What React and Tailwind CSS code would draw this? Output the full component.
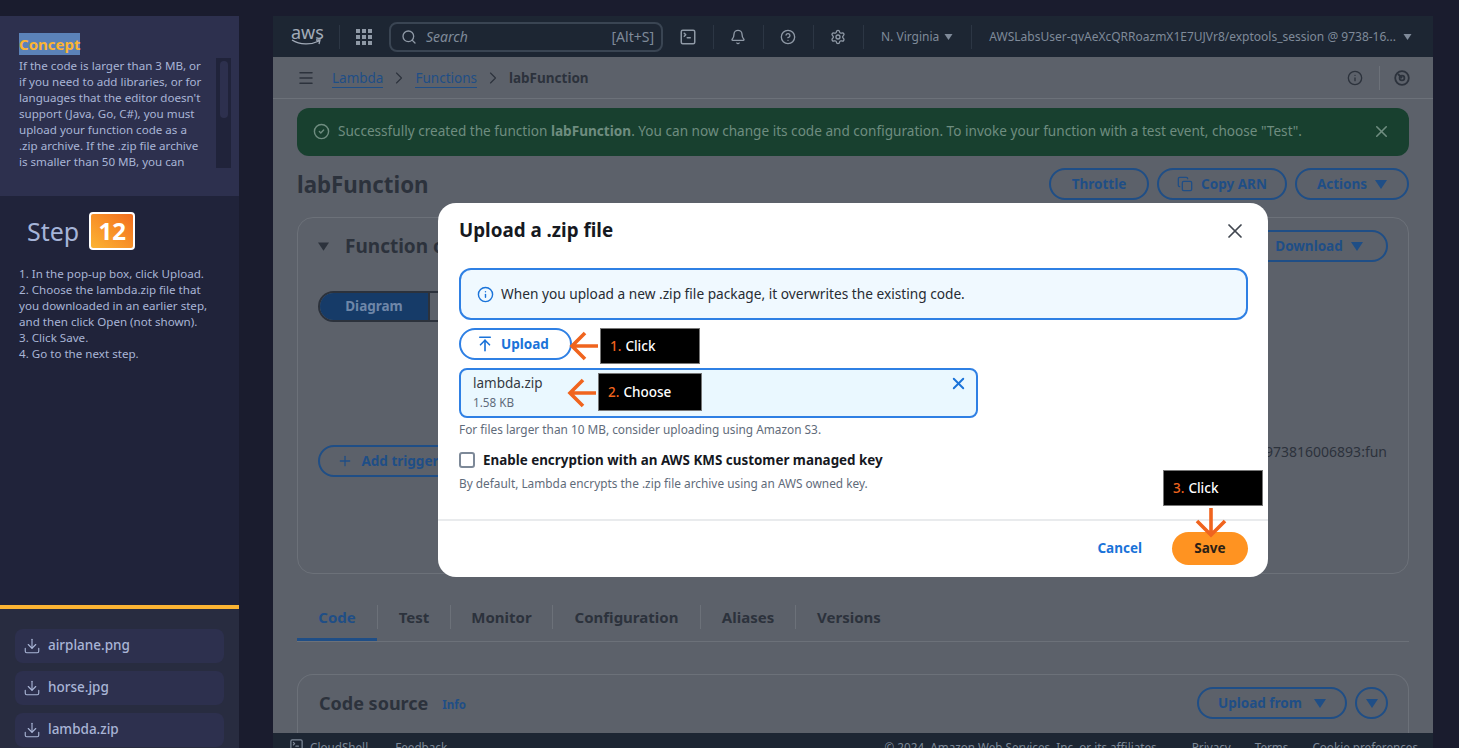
import React from "react";
import { Download, Search, Bell, CircleHelp, Settings, Menu, ChevronRight, CircleCheck, X, Copy, Info, SquareTerminal, Plus, ArrowUpToLine } from "lucide-react";

const Tri = ({ c = "w-[12px] h-[9px]" }) => (
  <svg viewBox="0 0 12 9" className={c} fill="currentColor"><path d="M0 0h12L6 9z" /></svg>
);

const ArrowLeft = () => (
  <svg width="30" height="32" viewBox="0 0 30 32" fill="none" stroke="#f0641e" strokeWidth="3.6" className="shrink-0">
    <path d="M30 16H4M17 3 4 16l13 13" />
  </svg>
);

const Callout = ({ num, label, w, h }) => (
  <div className={`bg-black border border-[#777] flex items-center pl-[9px] text-[13.5px] text-white font-medium shrink-0 ${w} ${h}`}>
    <span className="text-[#f0641e] mr-[4px]">{num}</span>{label}
  </div>
);

const FileBtn = ({ name }) => (
  <div className="h-[34px] shrink-0 rounded-lg bg-[#2d304e] flex items-center pl-[8px] pb-[1px] gap-[7px] text-[#a9b5d6] text-[13.5px] font-medium">
    <Download size={18} strokeWidth={1.5} />
    {name}
  </div>
);

const OutlineBtn = ({ children, className = "" }) => (
  <div className={`h-[32px] shrink-0 rounded-full border-2 border-[#1f4e86] flex items-center justify-center text-[#1f4e86] text-[13.5px] font-bold ${className}`}>
    {children}
  </div>
);

const Sep = () => <div className="w-px h-[24px] bg-[#2c3644]" />;

function Sidebar() {
  return (
    <aside className="w-[239px] shrink-0 flex flex-col h-[732px] mt-[16px] bg-[#20233a] text-[#a9b5d6]">
      <section className="h-[180px] bg-[#2d304e] pt-[16px] pl-[19px] pr-[8px] shrink-0">
        <span className="bg-[#5b82b8] text-[#fbb433] text-[15px] font-bold leading-[22px] h-[22px] inline-block">Concept</span>
        <div className="flex justify-between mt-[2px]">
          <p className="text-[11.6px] leading-[16px] w-[188px] h-[112px] overflow-hidden">
            If the code is larger than 3 MB, or if you need to add libraries, or for languages that the editor doesn't support (Java, Go, C#), you must upload your function code as a .zip archive. If the .zip file archive is smaller than 50 MB, you can
          </p>
          <div className="w-[15px] h-[110px] bg-[#20233a] flex justify-center pt-[3px]">
            <div className="w-[8px] h-[57px] rounded bg-[#2d304e]" />
          </div>
        </div>
      </section>
      <section className="flex-1 pl-[19px] pt-[16px]">
        <div className="flex items-center pl-[8px] gap-[10px]">
          <span className="text-[25px] leading-[38px] text-[#a5b4d8]">Step</span>
          <div className="w-[46px] h-[38px] rounded border-2 border-white bg-gradient-to-tr from-[#fbb433] to-[#f26c1d] flex items-center justify-center text-white text-[24px] font-bold">12</div>
        </div>
        <div className="mt-[16px] text-[11.6px] leading-[16px]">
          <div>1. In the pop-up box, click Upload.</div>
          <div>2. Choose the lambda.zip file that</div>
          <div>you downloaded in an earlier step,</div>
          <div>and then click Open (not shown).</div>
          <div>3. Click Save.</div>
          <div>4. Go to the next step.</div>
        </div>
      </section>
      <section className="h-[143px] shrink-0 border-t-4 border-[#fbb433] bg-[#282c40] px-[15px] pt-[20px] flex flex-col gap-[8px] overflow-hidden">
        <FileBtn name="airplane.png" />
        <FileBtn name="horse.jpg" />
        <FileBtn name="lambda.zip" />
      </section>
    </aside>
  );
}

function TopBar() {
  return (
    <header className="h-[41px] shrink-0 bg-[#1d2633] flex items-center text-[#7f8a99] text-[12px]">
      <div className="w-[66px] pl-[18px] flex flex-col items-start text-[#a2abb8] -mt-[3px]">
        <span className="text-[18px] leading-[14px]">aws</span>
        <svg width="31" height="7" viewBox="0 0 31 7" fill="none" stroke="#a2abb8" strokeWidth="1.3"><path d="M1 1c8 5 19 5 27 1M25 1l4 0-1 4" /></svg>
      </div>
      <Sep />
      <div className="ml-[16px] grid grid-cols-3 gap-[2px]">
        {Array.from({ length: 9 }).map((_, i) => <span key={i} className="w-[4px] h-[4px] bg-[#8f99a6]" />)}
      </div>
      <div className="ml-[17px] w-[274px] h-[30px] rounded-lg border-2 border-[#3a4553] flex items-center pl-[10px] pr-[7px]">
        <Search size={16} className="text-[#8f99a6]" />
        <span className="ml-[9px] italic text-[14px]">Search</span>
        <span className="ml-auto text-[14px]">[Alt+S]</span>
      </div>
      <SquareTerminal size={18} className="ml-[16px] text-[#8f99a6]" />
      <div className="ml-[16px]"><Sep /></div>
      <Bell size={16} className="ml-[16px] text-[#8f99a6]" />
      <div className="ml-[17px]"><Sep /></div>
      <CircleHelp size={16} className="ml-[16px] text-[#8f99a6]" />
      <div className="ml-[17px]"><Sep /></div>
      <Settings size={16} className="ml-[16px] text-[#8f99a6]" />
      <div className="ml-[17px]"><Sep /></div>
      <span className="ml-[17px]">N. Virginia</span>
      <Tri c="w-[9px] h-[6px] ml-[5px]" />
      <div className="ml-[18px]"><Sep /></div>
      <span className="ml-[17px]">AWSLabsUser-qvAeXcQRRoazmX1E7UJVr8/exptools_session @ 9738-16...</span>
      <Tri c="w-[9px] h-[6px] ml-[7px]" />
    </header>
  );
}

function Background() {
  return (
    <main className="w-[1160px] ml-[34px] mt-[16px] h-[732px] bg-[#5c616a] flex flex-col overflow-hidden text-[#2c323c]">
      <TopBar />
      <div className="h-[42px] shrink-0 border-b border-[#6c7179] flex items-center pl-[24px] pr-[23px] pt-[1px] text-[13.5px]">
        <Menu size={18} className="text-[#2c323c]" />
        <span className="ml-[17px] text-[#1f4e86] border-b border-[#1f4e86] leading-[18px]">Lambda</span>
        <ChevronRight size={20} strokeWidth={1.3} className="mx-[6px] text-[#2c323c]" />
        <span className="text-[#1f4e86] border-b border-[#1f4e86] leading-[18px]">Functions</span>
        <ChevronRight size={20} strokeWidth={1.3} className="mx-[6px] text-[#2c323c]" />
        <span className="font-bold text-[#2c323c]">labFunction</span>
        <Info size={16} className="ml-auto" />
        <div className="w-px h-[24px] bg-[#6c7179] ml-[16px] mr-[14px]" />
        <svg width="16" height="16" viewBox="0 0 16 16" fill="none" stroke="currentColor" strokeWidth="1.8">
          <circle cx="8" cy="8" r="6.8" />
          <path d="M8 8 4 4" />
          <circle cx="8" cy="8" r="2.4" />
        </svg>
      </div>
      <div className="mx-[24px] mt-[9px] h-[48px] shrink-0 rounded-xl bg-[#18402f] flex items-center pl-[16px] pr-[18px] pb-[1px] text-[#6f8d80] text-[13.6px]">
        <CircleCheck size={17} className="mr-[8px]" />
        <span>Successfully created the function <b>labFunction</b>. You can now change its code and configuration. To invoke your function with a test event, choose "Test".</span>
        <X size={19} className="ml-auto" />
      </div>
      <div className="mx-[24px] mt-[12px] h-[32px] shrink-0 flex items-center">
        <h1 className="text-[22.3px] font-bold mt-[2px]">labFunction</h1>
        <div className="ml-auto flex gap-[8px]">
          <OutlineBtn className="w-[100px]">Throttle</OutlineBtn>
          <OutlineBtn className="w-[130px] gap-[8px]"><Copy size={16} />Copy ARN</OutlineBtn>
          <OutlineBtn className="w-[114px] gap-[8px]">Actions <Tri /></OutlineBtn>
        </div>
      </div>
      <div className="mx-[24px] mt-[17px] h-[357px] shrink-0 rounded-2xl border border-[#6c7179] px-[20px] pt-[12px] relative">
        <div className="flex items-center">
          <Tri c="w-[11px] h-[9px] mr-[16px]" />
          <span className="text-[19px] font-bold">Function overview</span>
          <OutlineBtn className="ml-auto w-[138px] gap-[8px]">Download <Tri /></OutlineBtn>
        </div>
        <div className="mt-[29px] w-[180px] h-[31px] rounded-full border-2 border-[#2c323c] overflow-hidden flex text-[13.5px] font-bold">
          <div className="w-[110px] bg-[#163b68] border-r-2 border-[#2c323c] text-[#6f87a8] flex items-center justify-center">Diagram</div>
        </div>
        <OutlineBtn className="mt-[123px] w-[140px] gap-[8px]"><Plus size={16} />Add trigger</OutlineBtn>
        <span className="absolute right-[21px] top-[223px] text-[14px]">973816006893:fun</span>
      </div>
      <div className="mx-[24px] mt-[26px] h-[42px] shrink-0 border-b border-[#6c7179] flex items-start text-[15px] font-bold">
        <div className="w-[80px] h-[41px] pb-[3px] border-b-[3px] border-[#1f4e86] text-[#1f4e86] flex items-center justify-center">Code</div>
        {[["Test", 73], ["Monitor", 102], ["Configuration", 148], ["Aliases", 95], ["Versions", 107]].map(([t, w]) => (
          <div key={t} className="h-[24px] mt-[5px] flex items-center justify-center border-l border-[#6c7179]" style={{ width: w }}>{t}</div>
        ))}
      </div>
      <div className="mx-[24px] mt-[32px] flex-1 rounded-t-2xl border border-[#6c7179] border-b-0 pl-[21px] pr-[20px] pb-[2px] flex items-center">
        <span className="text-[18px] font-bold">Code source</span>
        <span className="ml-[14px] text-[11.5px] text-[#1f4e86] font-bold mt-[3px]">Info</span>
        <OutlineBtn className="ml-auto w-[150px] gap-[12px]">Upload from <Tri /></OutlineBtn>
        <OutlineBtn className="ml-[8px] w-[33px]"><Tri /></OutlineBtn>
      </div>
      <footer className="h-[15px] shrink-0 bg-[#1d2633] flex items-start text-[#7f8a99] text-[11.7px] pl-[16px] pr-[15px] overflow-hidden">
        <SquareTerminal size={15} className="mt-[5px]" />
        <span className="ml-[6px] mt-[6px]">CloudShell</span>
        <span className="ml-[27px] mt-[6px]">Feedback</span>
        <span className="ml-auto mt-[6px]">© 2024, Amazon Web Services, Inc. or its affiliates.</span>
        <span className="ml-[32px] mt-[6px]">Privacy</span>
        <span className="ml-[24px] mt-[6px]">Terms</span>
        <span className="ml-[24px] mt-[6px]">Cookie preferences</span>
      </footer>
    </main>
  );
}

function Modal() {
  return (
    <div className="absolute left-[438px] top-[203px] w-[830px] h-[374px] bg-white rounded-[18px] text-[#16191f] flex flex-col">
      <div className="h-[65px] shrink-0 flex items-center justify-between pb-[10px] pl-[21px] pr-[21px]">
        <h2 className="text-[18.8px] font-bold">Upload a .zip file</h2>
        <X size={24} strokeWidth={1.7} className="text-[#414750]" />
      </div>
      <div className="ml-[21px] mr-[20px] h-[52px] shrink-0 rounded-xl border-2 border-[#2f80e4] bg-[#f0f9ff] flex items-center pl-[16px] text-[13.7px] text-[#272c33]">
        <Info size={17} strokeWidth={2} className="text-[#1a73d9] mr-[7px]" />
        When you upload a new .zip file package, it overwrites the existing code.
      </div>
      <div className="ml-[21px] mt-[8px] h-[32px] shrink-0 flex items-center">
        <div className="w-[113px] h-[32px] shrink-0 rounded-full border-2 border-[#2f80e4] flex items-center justify-center gap-[7px] text-[#1a73d9] text-[13.5px] font-bold pr-[6px]">
          <ArrowUpToLine size={18} strokeWidth={2.2} />Upload
        </div>
        <div className="flex items-center mt-[4px] -ml-[4px]">
          <ArrowLeft />
          <div className="ml-[2px]"><Callout num="1." label="Click" w="w-[100px]" h="h-[36px]" /></div>
        </div>
      </div>
      <div className="ml-[21px] mt-[8px] w-[519px] h-[50px] shrink-0 rounded-lg border-2 border-[#2f80e4] bg-[#eaf8ff] relative flex items-center">
        <div className="pl-[12px] w-[105px] shrink-0">
          <div className="text-[13.5px] leading-[18px] text-[#353a42]">lambda.zip</div>
          <div className="text-[11.7px] leading-[20px] text-[#5f6b7a]">1.58 KB</div>
        </div>
        <ArrowLeft />
        <div className="ml-[2px] -mt-[2px]"><Callout num="2." label="Choose" w="w-[104px]" h="h-[38px]" /></div>
        <X size={19} strokeWidth={2.4} className="absolute right-[8px] top-[4px] text-[#1a73d9]" />
      </div>
      <p className="ml-[21px] mt-[3px] text-[11.85px] leading-[16px] text-[#5f6b7a]">For files larger than 10 MB, consider uploading using Amazon S3.</p>
      <label className="ml-[21px] mt-[14px] flex items-center gap-[8px] text-[13.4px] font-bold leading-[18px]">
        <span className="w-[16px] h-[16px] rounded-[3px] border-2 border-[#7d8998] shrink-0" />
        Enable encryption with an AWS KMS customer managed key
      </label>
      <p className="ml-[21px] mt-[6px] text-[11.85px] leading-[16px] text-[#5f6b7a]">By default, Lambda encrypts the .zip file archive using an AWS owned key.</p>
      <div className="mt-[28px] border-t-2 border-[#e9ebed] flex-1 flex items-center justify-end pr-[20px] pb-[1px] relative">
        <span className="text-[13.5px] font-bold text-[#1a73d9] mr-[30px]">Cancel</span>
        <div className="w-[76px] h-[33px] rounded-full bg-[#ff9321] flex items-center justify-center text-[13.5px] font-bold text-[#2b2016]">Save</div>
        <div className="absolute right-[5px] top-[-51px]">
          <Callout num="3." label="Click" w="w-[100px]" h="h-[36px]" />
        </div>
        <svg className="absolute right-[41px] top-[-13px]" width="32" height="30" viewBox="0 0 32 30" fill="none" stroke="#f0641e" strokeWidth="3.6">
          <path d="M16 0v27M2 13l14 14 14-14" />
        </svg>
      </div>
    </div>
  );
}

export default function App() {
  return (
    <div className="relative w-[1459px] h-[748px] overflow-hidden bg-[#1a1c2e] flex" style={{ fontFamily: '"Noto Sans", "Open Sans", sans-serif' }}>
      <Sidebar />
      <Background />
      <Modal />
    </div>
  );
}
